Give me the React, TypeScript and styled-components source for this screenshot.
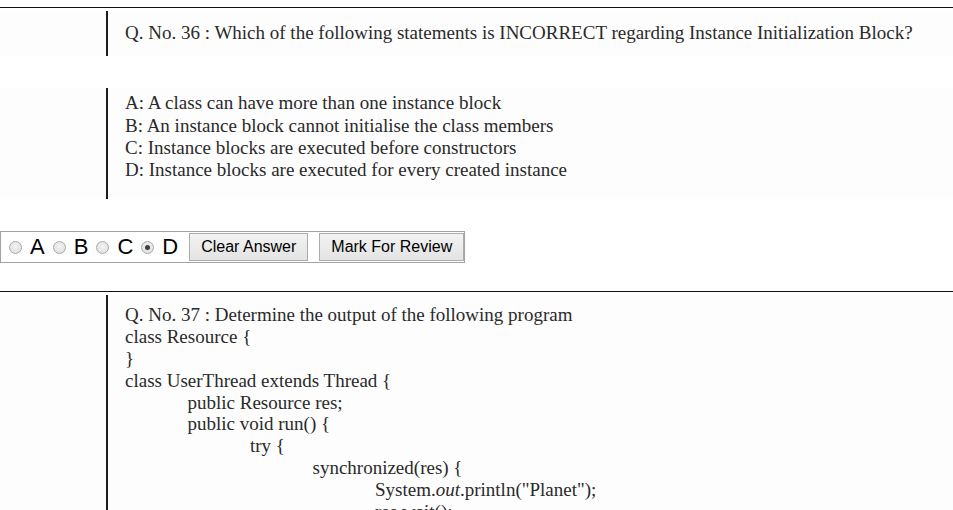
import React from 'react';
import styled, { createGlobalStyle } from 'styled-components';

const GlobalStyle = createGlobalStyle`
  html, body {
    margin: 0;
    padding: 0;
    background: #ffffff;
  }
  body {
    font-family: 'Liberation Sans', Arial, sans-serif;
    color: #000;
  }
`;

type CodeLine = { level: number; text: React.ReactNode };

const codeLines: CodeLine[] = [
  { level: 0, text: 'Q. No. 37 : Determine the output of the following program' },
  { level: 0, text: 'class Resource {' },
  { level: 0, text: '}' },
  { level: 0, text: 'class UserThread extends Thread {' },
  { level: 1, text: 'public Resource res;' },
  { level: 1, text: 'public void run() {' },
  { level: 2, text: 'try {' },
  { level: 3, text: 'synchronized(res) {' },
  {
    level: 4,
    text: (
      <>
        System.<i>out</i>.println("Planet");
      </>
    ),
  },
  { level: 4, text: 'res.wait();' },
];

const options = [
  'A: A class can have more than one instance block',
  'B: An instance block cannot initialise the class members',
  'C: Instance blocks are executed before constructors',
  'D: Instance blocks are executed for every created instance',
];

export default function App() {
  const [answer, setAnswer] = React.useState('D');

  return (
    <Page>
      <GlobalStyle />
      <Divider />
      <ScanBlock $top={3}>
        <ScanInner $padTop={11} $padBottom={12}>
          <ScanLine>
            Q. No. 36 : Which of the following statements is INCORRECT regarding Instance
            Initialization Block?
          </ScanLine>
        </ScanInner>
      </ScanBlock>

      <ScanBlock $top={32}>
        <ScanInner $padTop={4} $padBottom={18}>
          {options.map((o) => (
            <ScanLine key={o}>{o}</ScanLine>
          ))}
        </ScanInner>
      </ScanBlock>

      <AnswerBar>
        {['A', 'B', 'C', 'D'].map((l, i) => (
          <Choice key={l} $last={i === 3}>
            <Radio
              type="radio"
              name="q36"
              checked={answer === l}
              onChange={() => setAnswer(l)}
            />
            {l}
          </Choice>
        ))}
        <ActionButton type="button" onClick={() => setAnswer('')}>
          Clear Answer
        </ActionButton>
        <ActionButton type="button">Mark For Review</ActionButton>
      </AnswerBar>

      <Divider $top={28} />
      <ScanBlock $top={3}>
        <ScanInner $padTop={9} $padBottom={6}>
          {codeLines.map((c, i) => (
            <CodeRow key={i} $level={c.level}>
              {c.text}
            </CodeRow>
          ))}
        </ScanInner>
      </ScanBlock>
    </Page>
  );
}

const Page = styled.div`
  display: flex;
  flex-direction: column;
  align-items: flex-start;
  padding-top: 7px;
  width: 953px;
  overflow: hidden;
`;

const Divider = styled.div<{ $top?: number }>`
  align-self: stretch;
  height: 1px;
  background: #111;
  margin-top: ${(p) => p.$top ?? 0}px;
`;

const ScanBlock = styled.div<{ $top: number }>`
  align-self: stretch;
  margin-top: ${(p) => p.$top}px;
  padding-left: 106px;
  background: #fdfdfd;
`;

const ScanInner = styled.div<{ $padTop: number; $padBottom: number }>`
  border-left: 2px solid #1c1c1c;
  padding: ${(p) => p.$padTop}px 0 ${(p) => p.$padBottom}px 17px;
  font-family: 'Liberation Serif', 'Times New Roman', serif;
  font-size: 19px;
  color: #2a2a2a;
`;

const ScanLine = styled.div`
  line-height: 22.3px;
  white-space: nowrap;
`;

const CodeRow = styled.div<{ $level: number }>`
  line-height: 21.8px;
  white-space: nowrap;
  padding-left: ${(p) => p.$level * 62.5}px;

  i {
    font-style: italic;
  }
`;

const AnswerBar = styled.div`
  display: inline-flex;
  align-items: center;
  margin-top: 32px;
  height: 30px;
  padding-left: 8px;
  border: 1px solid #a3a3a3;
`;

const Choice = styled.label<{ $last?: boolean }>`
  display: inline-flex;
  align-items: center;
  margin-right: ${(p) => (p.$last ? 0 : 8)}px;
  font-family: 'Liberation Sans', Arial, sans-serif;
  font-size: 22px;
  color: #000;
  cursor: pointer;
`;

const Radio = styled.input`
  appearance: none;
  -webkit-appearance: none;
  width: 13px;
  height: 13px;
  margin: 0 8px 0 0;
  border-radius: 50%;
  border: 1px solid #a9a9a9;
  background: radial-gradient(circle at 50% 40%, #f2f2f2 0%, #dcdcdc 100%);
  box-sizing: border-box;
  position: relative;

  &:checked::after {
    content: '';
    position: absolute;
    left: 3px;
    top: 3px;
    width: 5px;
    height: 5px;
    border-radius: 50%;
    background: #3d3d3d;
  }
`;

const ActionButton = styled.button`
  height: 28px;
  margin-left: 11px;
  padding: 0 11px;
  border: 1px solid #acacac;
  border-radius: 0;
  background: linear-gradient(#f3f3f3, #e3e3e3);
  font-family: 'Liberation Sans', Arial, sans-serif;
  font-size: 16px;
  color: #000;
  cursor: pointer;
`;
